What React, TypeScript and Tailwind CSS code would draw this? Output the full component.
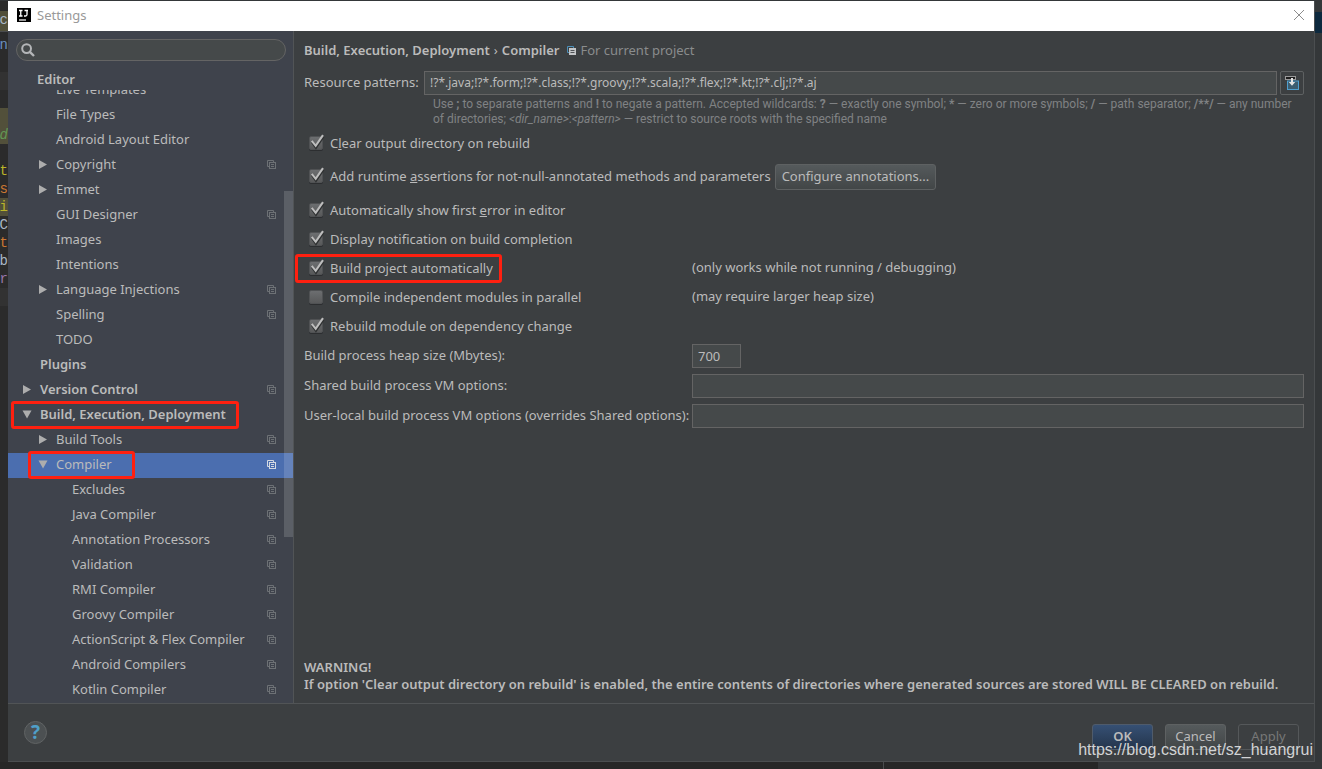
import { useState, type ReactNode } from "react";

type TreeItem = {
  label: string;
  level: 0 | 1 | 2;
  arrow?: "open" | "closed";
  shared?: boolean;
  selected?: boolean;
  mark?: string;
};

const tree: TreeItem[] = [
  { label: "Live Templates", level: 1 },
  { label: "File Types", level: 1 },
  { label: "Android Layout Editor", level: 1 },
  { label: "Copyright", level: 1, arrow: "closed", shared: true },
  { label: "Emmet", level: 1, arrow: "closed" },
  { label: "GUI Designer", level: 1, shared: true },
  { label: "Images", level: 1 },
  { label: "Intentions", level: 1 },
  { label: "Language Injections", level: 1, arrow: "closed", shared: true },
  { label: "Spelling", level: 1, shared: true },
  { label: "TODO", level: 1 },
  { label: "Plugins", level: 0 },
  { label: "Version Control", level: 0, arrow: "closed", shared: true },
  { label: "Build, Execution, Deployment", level: 0, arrow: "open", mark: "left-[3px] w-[228px]" },
  { label: "Build Tools", level: 1, arrow: "closed", shared: true },
  { label: "Compiler", level: 1, arrow: "open", shared: true, selected: true, mark: "left-5 w-[107px]" },
  { label: "Excludes", level: 2, shared: true },
  { label: "Java Compiler", level: 2, shared: true },
  { label: "Annotation Processors", level: 2, shared: true },
  { label: "Validation", level: 2, shared: true },
  { label: "RMI Compiler", level: 2, shared: true },
  { label: "Groovy Compiler", level: 2, shared: true },
  { label: "ActionScript & Flex Compiler", level: 2, shared: true },
  { label: "Android Compilers", level: 2, shared: true },
  { label: "Kotlin Compiler", level: 2, shared: true },
];

const indent = { 0: "pl-[14px]", 1: "pl-[30px]", 2: "pl-[46px]" };

function Arrow({ kind }: { kind?: "open" | "closed" }) {
  return (
    <svg width="10" height="10" viewBox="0 0 10 10" className="shrink-0" fill="#adadad" aria-hidden="true">
      {kind === "closed" && <path d="M1 1 L9 5.5 L1 10 Z" />}
      {kind === "open" && <path d="M0.5 1.5 H9.5 L5 9.5 Z" />}
    </svg>
  );
}

function SharedIcon({ className }: { className: string }) {
  return (
    <svg width="9" height="9" viewBox="0 0 9 9" className={className} fill="none" stroke="currentColor" aria-hidden="true">
      <path d="M2.5 6.5 H0.5 V0.5 H6.5 V2.5" />
      <rect x="2.5" y="2.5" width="6" height="6" />
      <path d="M4 4.5 H7 M4 6.5 H7" />
    </svg>
  );
}

function TreeRow({ item }: { item: TreeItem }) {
  return (
    <li className={"relative " + (item.selected ? "bg-[#4b6eaf]" : "")}>
      <button
        type="button"
        className={
          "flex h-[25px] w-full items-center pr-[17px] pb-[3px] text-left " +
          indent[item.level] +
          (item.level === 0 ? " font-semibold" : "")
        }
      >
        <Arrow kind={item.arrow} />
        <span className="ml-2 grow whitespace-nowrap">{item.label}</span>
        {item.shared && <SharedIcon className={item.selected ? "shrink-0 text-[#d5dae2]" : "shrink-0 text-[#6d7175]"} />}
      </button>
      {item.mark && (
        <span className={"pointer-events-none absolute -top-0.5 z-10 h-[28px] rounded-[3px] border-3 border-[#ff2010] " + item.mark} />
      )}
    </li>
  );
}

function Check({ checked: initial, children }: { checked: boolean; children: ReactNode }) {
  const [checked, setChecked] = useState(initial);
  return (
    <label className="flex items-center pb-[2px] pl-[5px] whitespace-nowrap">
      <span className="relative mr-[7px] block size-[14px]">
        <input
          type="checkbox"
          checked={checked}
          onChange={(e) => setChecked(e.target.checked)}
          className="block size-[14px] appearance-none rounded-[2px] border border-[#505254] bg-linear-to-b from-[#6c6e70] to-[#58595a] shadow-[0_1px_0_#2c2e30]"
        />
        {checked && (
          <svg width="18" height="16" viewBox="0 0 18 16" className="pointer-events-none absolute -top-0.5 left-0" fill="none" aria-hidden="true">
            <path d="M3.2 8 L6.9 13.2 L14.2 2.4" stroke="#2f3132" strokeWidth="2.8" />
            <path d="M2.8 6.8 L6.7 11.8 L14 1.2" stroke="#bdbdbd" strokeWidth="2.1" />
          </svg>
        )}
      </span>
      <span>{children}</span>
    </label>
  );
}

const field = "h-[24px] min-w-0 border border-[#646464] bg-[#45494a] px-[5px] pb-px text-[#bbbbbb] outline-none";
const button = "h-[26px] rounded-[3px] border border-[#5e6162] bg-linear-to-b from-[#555a5c] to-[#424647] pb-[2px]";

const codeRows: { text: string; className: string }[] = [
  { text: "c", className: "h-[20px] bg-[#52503a] text-[#a9b7c6]" },
  { text: "", className: "h-[5px] border-t border-[#4a4c4e]" },
  { text: "on", className: "h-[18px] text-[#6a8fc0]" },
  { text: "", className: "h-[18px]" },
  { text: "", className: "h-[18px] bg-[#323232]" },
  { text: "", className: "h-[18px]" },
  { text: "", className: "h-[18px] bg-[#52503a]" },
  { text: "d", className: "h-[18px] bg-[#52503a] text-[#629755] italic" },
  { text: "", className: "h-[18px]" },
  { text: "t", className: "h-[18px] text-[#bbb529]" },
  { text: "us", className: "h-[18px] text-[#cc7832]" },
  { text: "wi", className: "h-[18px] bg-[#52503a] text-[#bbb529]" },
  { text: "eC", className: "h-[18px] text-[#a9b7c6]" },
  { text: "t", className: "h-[18px] text-[#cc7832]" },
  { text: "ob", className: "h-[18px] text-[#a9b7c6]" },
  { text: "er", className: "h-[18px] text-[#9876aa]" },
  { text: "", className: "h-[18px] bg-[#323232]" },
];

function EditorGutter() {
  return (
    <div
      className="w-2 shrink-0 overflow-hidden bg-[#2b2b2b] pt-[10px] font-['Liberation_Mono',monospace] text-[14px] leading-[18px]"
      aria-hidden="true"
    >
      {codeRows.map((row, i) => (
        <div key={i} className={"flex justify-end " + row.className}>
          {row.text}
        </div>
      ))}
    </div>
  );
}

function Sidebar() {
  return (
    <nav className="relative flex w-[286px] shrink-0 flex-col border-r border-[#515456] bg-[#3f434c]">
      <div className="h-[31px] px-2 pt-2 pr-[7px]">
        <label className="flex h-[22px] items-center rounded-full border border-[#646464] bg-[#45494a] pl-1">
          <svg width="14" height="14" viewBox="0 0 14 14" fill="none" stroke="#b4b6b8" aria-hidden="true">
            <circle cx="5.6" cy="5.6" r="4.4" strokeWidth="2" />
            <path d="M8.8 8.8 L13 13" strokeWidth="2.4" />
          </svg>
          <input type="text" aria-label="Search settings" className="min-w-0 grow bg-transparent px-1 outline-none" />
        </label>
      </div>
      <div className="flex h-[28px] items-center pt-[5px] pl-[29px] font-semibold">Editor</div>
      <div className="min-h-0 grow overflow-hidden">
        <ul className="-mt-3">
          {tree.map((item) => (
            <TreeRow key={item.label} item={item} />
          ))}
        </ul>
      </div>
      <div className="pointer-events-none absolute top-[160px] right-0 h-[346px] w-[9px] bg-white/15" />
    </nav>
  );
}

function Main() {
  return (
    <main className="flex min-w-0 grow flex-col px-[10px] pb-[10px]">
      <div className="flex h-10 items-center pb-[2px] font-semibold whitespace-nowrap">
        <span>Build, Execution, Deployment</span>
        <span className="mx-1 font-normal">›</span>
        <span>Compiler</span>
        <svg width="9" height="9" viewBox="0 0 9 9" className="mr-1 ml-2" fill="none" aria-hidden="true">
          <path d="M2 6.5 H0.5 V0.5 H6.5 V2" stroke="#4d8fb8" />
          <rect x="2" y="2" width="7" height="7" fill="#c3c5c7" />
          <path d="M3.5 4.5 H7.5 M3.5 6.5 H7.5" stroke="#505356" />
        </svg>
        <span className="font-normal text-[#8a8c8d]">For current project</span>
      </div>

      <div className="flex items-center">
        <label htmlFor="patterns" className="w-[120px] shrink-0 pb-[2px] whitespace-nowrap">
          Resource patterns:
        </label>
        <input
          id="patterns"
          type="text"
          defaultValue="!?*.java;!?*.form;!?*.class;!?*.groovy;!?*.scala;!?*.flex;!?*.kt;!?*.clj;!?*.aj"
          className={field + " grow text-[12px]"}
        />
        <button type="button" aria-label="Expand" className="ml-[3px] flex size-[24px] shrink-0 items-center justify-center rounded-[2px] border border-[#5e6162]">
          <svg width="14" height="14" viewBox="0 0 14 14" fill="none" aria-hidden="true">
            <rect x="2.5" y="5" width="11" height="8.5" fill="#3c5d70" stroke="#4f9fcf" />
            <rect x="0.5" y="0.5" width="10" height="3" fill="#1d1d1d" stroke="#9a9a9a" />
            <path d="M6 2 H8 V6 H10.2 L7 9.8 L3.8 6 H6 Z" fill="#e4e4e4" />
          </svg>
        </button>
      </div>

      <p className="mt-[2px] h-[32px] pr-3 pl-[129px] font-['Roboto',sans-serif] text-[12px] leading-[15px] text-[#808284]">
        Use <b>;</b> to separate patterns and <b>!</b> to negate a pattern. Accepted wildcards: <b>?</b> — exactly one symbol;{" "}
        <b>*</b> — zero or more symbols; <b>/</b> — path separator; <b>/**/</b> — any number of directories;{" "}
        <i>&lt;dir_name&gt;</i>:<i>&lt;pattern&gt;</i> — restrict to source roots with the specified name
      </p>

      <div className="flex h-[29px] items-center">
        <Check checked>C<u>l</u>ear output directory on rebuild</Check>
      </div>
      <div className="flex h-[38px] items-center">
        <Check checked>Add runtime <u>a</u>ssertions for not-null-annotated methods and parameters</Check>
        <button type="button" className={button + " ml-1 px-[6px] whitespace-nowrap"}>
          Configure annotations...
        </button>
      </div>
      <div className="grid grid-cols-[388px_1fr] auto-rows-[29px] items-center">
        <div className="col-span-2">
          <Check checked>Automatically show first <u>e</u>rror in editor</Check>
        </div>
        <div className="col-span-2">
          <Check checked>Display notification on build completion</Check>
        </div>
        <div className="relative">
          <Check checked>Build project automatically</Check>
          <span className="pointer-events-none absolute -top-[5px] -left-[9px] h-[29px] w-[207px] rounded-[3px] border-3 border-[#ff2010]" />
        </div>
        <span className="pb-1">(only works while not running / debugging)</span>
        <Check checked={false}>Compile independent modules in parallel</Check>
        <span className="pb-1">(may require larger heap size)</span>
        <div className="col-span-2">
          <Check checked>Rebuild module on dependency change</Check>
        </div>
      </div>
      <div className="mt-[3px] grid grid-cols-[388px_1fr] items-center gap-y-[6px] whitespace-nowrap">
        <label htmlFor="heap" className="pb-[2px]">Build process heap size (Mbytes):</label>
        <input id="heap" type="text" defaultValue="700" className={field + " w-[49px]"} />
        <label htmlFor="shared-vm" className="pb-[2px]">Shared build process VM options:</label>
        <input id="shared-vm" type="text" className={field} />
        <label htmlFor="local-vm" className="pb-[2px]">User-local build process VM options (overrides Shared options):</label>
        <input id="local-vm" type="text" className={field} />
      </div>

      <div className="mt-auto leading-[17px] font-semibold">
        <p>WARNING!</p>
        <p>
          If option 'Clear output directory on rebuild' is enabled, the entire contents of directories where generated sources are
          stored WILL BE CLEARED on rebuild.
        </p>
      </div>
    </main>
  );
}

export default function App() {
  return (
    <div className="relative flex min-h-screen flex-col bg-[#343739] pt-px font-['Noto_Sans',sans-serif] text-[13px] leading-[18px] text-[#bbbbbb]">
      <div className="flex grow">
        <EditorGutter />
        <div className="flex min-w-0 grow flex-col border-b border-[#4b4e50] bg-[#3c3f41]">
          <header className="flex h-[30px] shrink-0 items-center bg-white pr-[9px] pb-[2px] pl-[9px] text-[#999999]">
            <svg width="14" height="14" viewBox="0 0 14 14" aria-hidden="true">
              <rect width="14" height="14" fill="#000" />
              <path d="M2 2.5 H5.5 M3.75 2.5 V8 M2 8 H5.5 M7.5 2.5 H11 M10 2.5 V6.5 Q10 8 8.5 8 H7" stroke="#fff" strokeWidth="1.3" fill="none" />
              <path d="M2 12 H9" stroke="#fff" strokeWidth="1.2" />
            </svg>
            <h1 className="ml-[6px] grow">Settings</h1>
            <button type="button" aria-label="Close">
              <svg width="12" height="12" viewBox="0 0 12 12" stroke="#8c8c8c" aria-hidden="true">
                <path d="M1 1 L11 11 M11 1 L1 11" />
              </svg>
            </button>
          </header>
          <div className="flex grow">
            <Sidebar />
            <Main />
          </div>
          <footer className="flex h-[58px] shrink-0 items-center gap-3 border-t border-[#515456] pr-[15px] pl-4">
            <button
              type="button"
              aria-label="Help"
              className="mr-auto flex size-[23px] items-center justify-center rounded-full border border-[#606364] bg-[#4c5052] pb-px font-['Open_Sans',sans-serif] text-[19px] font-bold text-[#4f9fc8]"
            >
              ?
            </button>
            <button type="button" className="mt-[9px] h-[26px] w-[61px] rounded-[3px] border border-[#4f5b6b] bg-linear-to-b from-[#365074] to-[#24354c] pb-[2px] font-semibold">
              OK
            </button>
            <button type="button" className={button + " mt-[9px] w-[61px]"}>
              Cancel
            </button>
            <button type="button" disabled className="mt-[9px] h-[26px] w-[61px] rounded-[3px] border border-[#55585a] pb-[2px] text-[#777777]">
              Apply
            </button>
          </footer>
        </div>
        <div className="w-2 shrink-0 border-l border-[#4b4e50] pt-[11px]">
          <div className="h-[21px] bg-[#0d293e]" />
        </div>
      </div>
      <div className="flex h-[7px] shrink-0">
        <div className="w-[884px] shrink-0 border-r border-[#4a4c4e] bg-[#272727]" />
        <div className="w-[214px] shrink-0 bg-[#272727]" />
      </div>
      <span className="pointer-events-none absolute right-[9px] bottom-[10px] font-['Liberation_Sans',sans-serif] text-[16px] text-[#d2d3d4]">
        https://blog.csdn.net/sz_huangrui
      </span>
    </div>
  );
}
